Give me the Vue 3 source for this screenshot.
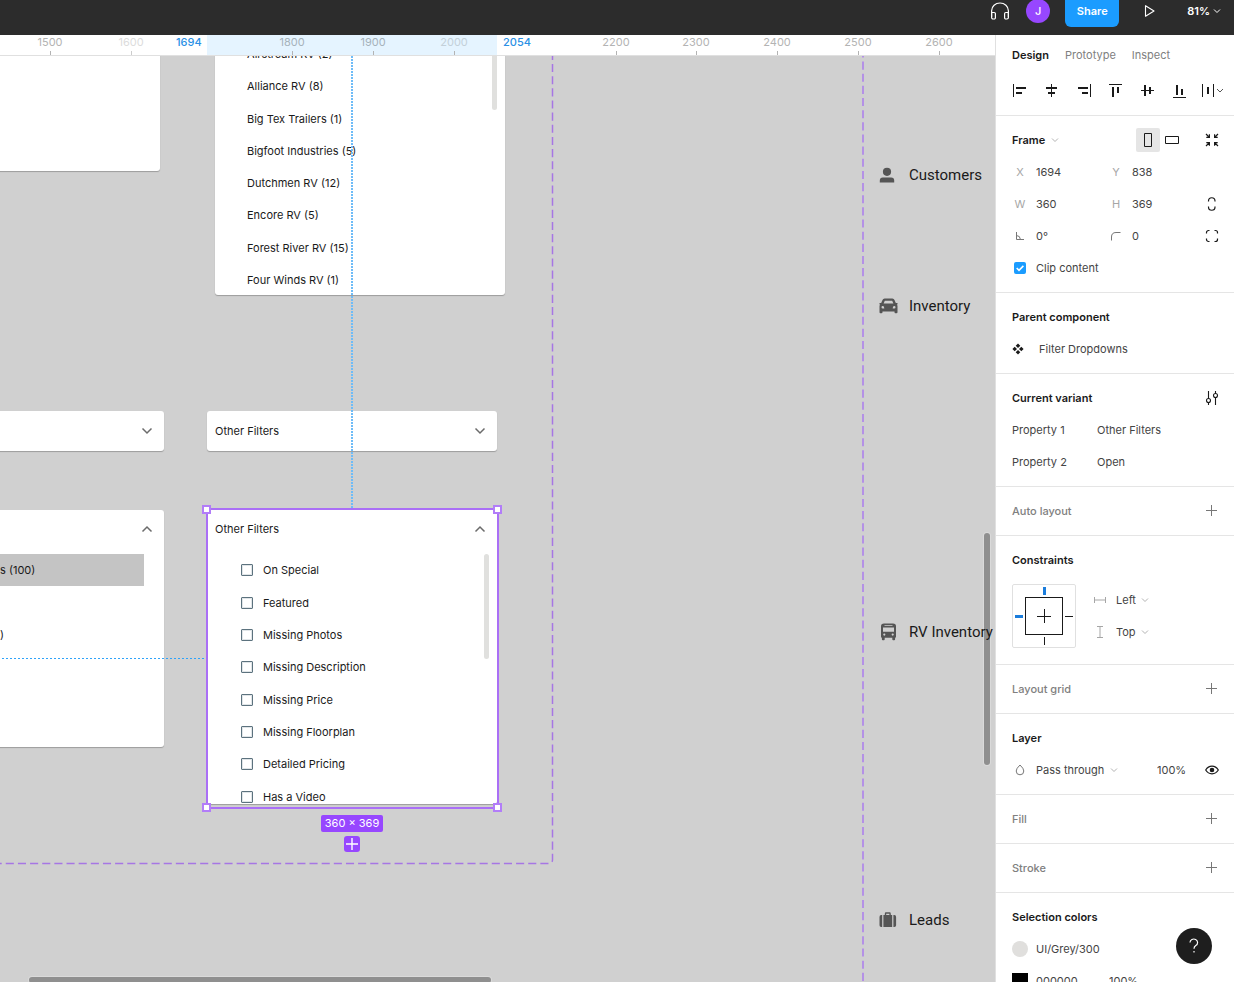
<script setup>
const rulerOrigin = 50
const rulerScale = 0.808
const rulerMarks = [
  { value: 1500 },
  { value: 1600, tone: 'faint' },
  { value: 1800, tone: 'covered' },
  { value: 1900, tone: 'covered' },
  { value: 2000, tone: 'covered-faint' },
  { value: 2200 },
  { value: 2300 },
  { value: 2400 },
  { value: 2500 },
  { value: 2600 },
]
const rulerLeft = (value) => Math.round(rulerOrigin + (value - 1500) * rulerScale) + 'px'

const makes = [
  'Airstream RV (2)',
  'Alliance RV (8)',
  'Big Tex Trailers (1)',
  'Bigfoot Industries (5)',
  'Dutchmen RV (12)',
  'Encore RV (5)',
  'Forest River RV (15)',
  'Four Winds RV (1)',
]
const filters = [
  'On Special',
  'Featured',
  'Missing Photos',
  'Missing Description',
  'Missing Price',
  'Missing Floorplan',
  'Detailed Pricing',
  'Has a Video',
]
const handles = ['nw', 'ne', 'sw', 'se']
const properties = [
  { id: 'prop-1', name: 'Property 1', value: 'Other Filters' },
  { id: 'prop-2', name: 'Property 2', value: 'Open' },
]
const aligns = [
  { name: 'Align left', w: [1, 2, 2], parts: ['M2.5 2v13', 'M5 6h10', 'M5 11h6'] },
  { name: 'Align horizontal centers', w: [1, 2, 2], parts: ['M8.5 2v13', 'M3 6h11', 'M5 11h7'] },
  { name: 'Align right', w: [1, 2, 2], parts: ['M15.5 2v13', 'M3 6h10', 'M7 11h6'] },
  { name: 'Align top', w: [1, 2, 2], parts: ['M2 2.5h13', 'M6 5v10', 'M11 5v6'] },
  { name: 'Align vertical centers', w: [1, 2, 2], parts: ['M2 8.5h13', 'M6 3v11', 'M11 5v7'] },
  { name: 'Align bottom', w: [1, 2, 2], parts: ['M2 15.5h13', 'M6 3v10', 'M11 7v6'] },
]
</script>

<template>
  <div class="app">
    <header class="topbar">
      <div class="tools">
        <button class="icon-btn" aria-label="Start audio">
          <svg width="20" height="20" viewBox="0 0 20 20" fill="none" stroke="#fff" stroke-width="1.2">
            <path d="M1.600 16V9.800a8.400 7.800 0 0 1 16.800 0V16" />
            <path d="M1.600 11.500h2.600a1.200 1.200 0 0 1 1.200 1.200v4.100a1.200 1.200 0 0 1-1.200 1.200H3a1.400 1.400 0 0 1-1.400-1.400zM18.400 11.500h-2.600a1.200 1.200 0 0 0-1.200 1.200v4.100a1.200 1.200 0 0 0 1.200 1.200H17a1.400 1.400 0 0 0 1.400-1.400z" />
          </svg>
        </button>
        <button class="avatar" aria-label="Account">J</button>
        <button class="share">Share</button>
        <button class="icon-btn play" aria-label="Present">
          <svg width="12" height="14" viewBox="0 0 12 14" fill="none" stroke="#fff" stroke-width="1.1" stroke-linejoin="round">
            <path d="M1.500 1.700v10.600L10 7z" />
          </svg>
        </button>
        <button class="zoom">
          <span>81%</span>
          <svg width="8" height="6" viewBox="0 0 8 6" fill="none" stroke="#fff"><path d="M1 1.500l3 3 3-3" /></svg>
        </button>
      </div>
    </header>

    <div class="body">
      <main class="stage">
        <div class="ruler">
          <div class="ruler-range"></div>
          <div v-for="m in rulerMarks" :key="m.value" class="mark" :class="m.tone" :style="{ left: rulerLeft(m.value) }">
            <span>{{ m.value }}</span><i></i>
          </div>
          <span class="edge edge-start">1694</span>
          <span class="edge edge-end">2054</span>
        </div>

        <div class="canvas">
          <section class="card card-blank"></section>

          <section class="card card-makes">
            <ul class="makes">
              <li v-for="m in makes" :key="m">{{ m }}</li>
            </ul>
            <div class="thumb"></div>
          </section>

          <section class="card card-left-closed">
            <div class="card-head">
              <svg class="chev" width="12" height="8" viewBox="0 0 12 8"><path d="M1.500 1.500L6 6l4.500-4.500" /></svg>
            </div>
          </section>

          <section class="card card-closed">
            <div class="card-head">
              <span>Other Filters</span>
              <svg class="chev" width="12" height="8" viewBox="0 0 12 8"><path d="M1.500 1.500L6 6l4.500-4.500" /></svg>
            </div>
          </section>

          <section class="card card-left-open">
            <div class="card-head">
              <svg class="chev" width="12" height="8" viewBox="0 0 12 8"><path d="M1.500 6.500L6 2l4.500 4.500" /></svg>
            </div>
            <div class="option picked">s (100)</div>
            <div class="option"></div>
            <div class="option">)</div>
          </section>

          <section class="card card-open">
            <div class="card-head">
              <span>Other Filters</span>
              <svg class="chev" width="12" height="8" viewBox="0 0 12 8"><path d="M1.500 6.500L6 2l4.500 4.500" /></svg>
            </div>
            <div class="open-body">
              <div class="filters">
                <label v-for="f in filters" :key="f"><input type="checkbox" />{{ f }}</label>
              </div>
              <div class="thumb"></div>
            </div>
          </section>

          <svg class="guides" width="100%" height="100%" fill="none">
            <path d="M552.500 0V804a3.500 3.500 0 0 1-3.500 3.500H0" stroke="#a676e4" stroke-width="1.500" stroke-dasharray="8.100 4.050" stroke-dashoffset="4.150" />
            <path d="M863 0V3000" stroke="#b491e6" stroke-width="2" stroke-dasharray="8.100 4.050" stroke-dashoffset="6.600" />
            <path d="M352 0V453" stroke="#6fbcf7" stroke-width="2" stroke-dasharray="2 1" />
            <path d="M2 602.500H206" stroke="#2ea3fa" stroke-width="1" stroke-dasharray="2 2" />
          </svg>

          <div class="selection">
            <i v-for="h in handles" :key="h" class="handle" :class="h"></i>
          </div>
          <div class="selection-meta">
            <span class="dims">360 × 369</span>
            <button class="add-variant" aria-label="Add variant">
              <svg width="16" height="16" viewBox="0 0 16 16" stroke="#fff" stroke-width="1.400"><path d="M8 2v12M2 8h12" /></svg>
            </button>
          </div>

          <div class="scroll-v"></div>
          <div class="scroll-h"></div>

          <div class="nav-item customers">
            <svg width="20" height="20" viewBox="0 0 20 20" fill="#555">
              <circle cx="8" cy="6.800" r="4.100" />
              <path d="M.800 17.600v-1.800q0-3.200 3-3.200h8.400q3 0 3 3.200v1.800z" />
            </svg>
            <span>Customers</span>
          </div>
          <div class="nav-item inventory">
            <svg width="20" height="20" viewBox="0 0 20 20" fill="#555">
              <path fill-rule="evenodd" d="M5.600 2.400h7.800q1.600 0 2.100 1.500l1.300 3.200h1.700v1.400h-.700q.700.700.700 1.800v6q0 1-1 1h-1q-1 0-1-1v-.800H3.500v.8q0 1-1 1h-1q-1 0-1-1v-6q0-1.100.7-1.800H.500V7.100h1.700l1.300-3.200q.5-1.500 2.100-1.500zm.2 2.400L4.600 7.600h9.800l-1.200-2.800zM3.700 10a1.200 1.200 0 1 0 0 2.400h1.600q0-2.400-1.600-2.400zm11.600 0q-1.600 0-1.600 2.400h1.600a1.200 1.200 0 1 0 0-2.400z" />
            </svg>
            <span>Inventory</span>
          </div>
          <div class="nav-item rv">
            <svg width="20" height="20" viewBox="0 0 20 20" fill="#555">
              <path fill-rule="evenodd" d="M5 1.600h9q3 0 3 2.600v10.600q0 .8-.9.900v1.600q0 .9-.9.900h-1q-.900 0-.900-.900v-1.500H5.700v1.500q0 .9-.9.900h-1q-.9 0-.9-.9v-1.600Q2 15.600 2 14.800V4.200q0-2.600 3-2.600zM5.500 3.200v.8h8v-.8zM4 5.400v4.300h11V5.400zm1.300 6.100a1.100 1.100 0 1 0 0 2.200 1.100 1.100 0 0 0 0-2.200zm8.400 0a1.100 1.100 0 1 0 0 2.200 1.100 1.100 0 0 0 0-2.200z" />
            </svg>
            <span>RV Inventory</span>
          </div>
          <div class="nav-item leads">
            <svg width="20" height="20" viewBox="0 0 20 20" fill="#555">
              <path d="M.500 7q0-2 1.700-2h1v12h-1Q.500 17 .500 15.200zM14.400 5h1q1.700 0 1.700 2v8.200q0 1.800-1.700 1.800h-1z" />
              <path fill-rule="evenodd" d="M4.400 5h1.400V3.700Q5.800 2.300 7 2.300h3.600q1.200 0 1.200 1.400V5h1.400v12H4.400zm2.800-1.300V5h3.200V3.700z" />
            </svg>
            <span>Leads</span>
          </div>
        </div>
      </main>

      <aside class="panel">
        <section class="top-section">
          <nav class="tabs">
            <button class="on">Design</button>
            <button>Prototype</button>
            <button>Inspect</button>
          </nav>
          <div class="aligns">
            <button v-for="a in aligns" :key="a.name" :aria-label="a.name">
              <svg width="17" height="17" viewBox="0 0 17 17" stroke="#1a1a1a" fill="none">
                <path v-for="(p, i) in a.parts" :key="i" :d="p" :stroke-width="a.w[i]" />
              </svg>
            </button>
            <button aria-label="Distribute">
              <svg width="25" height="17" viewBox="0 0 25 17" stroke="#1a1a1a" fill="none">
                <path d="M3.500 2v13M14.500 2v13" /><path d="M9 5v7" stroke-width="2" /><path d="M18 7l3 3 3-3" stroke="#555" />
              </svg>
            </button>
          </div>
        </section>

        <section>
          <div class="row">
            <label class="sel strong"><select aria-label="Frame type"><option>Frame</option></select>
              <svg width="8" height="6" viewBox="0 0 8 6" class="caret"><path d="M1 1.500l3 3 3-3" /></svg>
            </label>
            <button class="orient on" aria-label="Portrait"><svg width="24" height="24" fill="none" stroke="#1a1a1a"><path d="M8.500 5.500h7v13h-7z" /></svg></button>
            <button class="orient" aria-label="Landscape"><svg width="24" height="24" fill="none" stroke="#1a1a1a"><path d="M5.500 8.500h13v7h-13z" /></svg></button>
            <button class="end-btn shrink" aria-label="Resize to fit">
              <svg width="14" height="14" viewBox="0 0 14 14" fill="none" stroke="#1a1a1a" stroke-width="1.200"><path d="M1 1l3.500 3.500M1.300 4.400h3.100V1.300M13 1L9.500 4.500M9.600 1.300v3.100h3.100M1 13l3.500-3.500M1.300 9.600h3.100v3.100M13 13L9.500 9.500M12.700 9.600H9.600v3.100" /></svg>
            </button>
          </div>
          <div class="fields">
            <label for="fx">X</label><input id="fx" value="1694" />
            <label for="fy">Y</label><input id="fy" value="838" /><span></span>
            <label for="fw">W</label><input id="fw" value="360" />
            <label for="fh">H</label><input id="fh" value="369" />
            <button aria-label="Constrain proportions">
              <svg width="10" height="16" viewBox="0 0 10 16" fill="none" stroke="#1a1a1a" stroke-width="1.200"><path d="M1.500 5.500V5a3.200 3.200 0 0 1 6.500 0v.500M1.500 10.500v.500a3.200 3.200 0 0 0 6.500 0v-.500" /></svg>
            </button>
            <label for="fr" aria-label="Rotation"><svg width="10" height="10" fill="none" stroke="#777"><path d="M1.500 1v7.500H9M1.500 4.500q3.500 0 4 4" /></svg></label><input id="fr" value="0°" />
            <label for="fc" aria-label="Corner radius"><svg width="10" height="10" fill="none" stroke="#777"><path d="M.500 9.500V6Q.500 1.500 5 1.500h4.500" /></svg></label><input id="fc" value="0" />
            <button aria-label="Independent corners">
              <svg width="14" height="14" viewBox="0 0 14 14" fill="none" stroke="#1a1a1a" stroke-width="1.200"><path d="M1.500 4.500V3.500a2 2 0 0 1 2-2h1M9.500 1.500h1a2 2 0 0 1 2 2v1M12.500 9.500v1a2 2 0 0 1-2 2h-1M4.500 12.500h-1a2 2 0 0 1-2-2v-1" /></svg>
            </button>
          </div>
          <div class="clip">
            <span class="tick"><input id="clip" type="checkbox" checked /><svg width="12" height="12" fill="none" stroke="#fff" stroke-width="1.600"><path d="M2.700 6l2.300 2.300 4.400-4.400" /></svg></span>
            <label for="clip">Clip content</label>
          </div>
        </section>

        <section>
          <div class="row"><h2>Parent component</h2></div>
          <a class="row component" href="#">
            <svg width="12" height="12" fill="#1a1a1a"><path d="M6 .400l2.300 2.300L6 5 3.700 2.700zM6 7l2.300 2.300L6 11.600 3.700 9.300zM2.700 3.700L5 6 2.700 8.300.400 6zM9.300 3.700L11.600 6 9.300 8.300 7 6z" /></svg>
            <span>Filter Dropdowns</span>
          </a>
        </section>

        <section>
          <div class="row">
            <h2>Current variant</h2>
            <button class="end-btn" aria-label="Edit variant">
              <svg width="14" height="16" viewBox="0 0 14 16" fill="none" stroke="#1a1a1a" stroke-width="1.100"><path d="M3.500 1v7.500M3.500 12.500V15M10.500 1v2.500M10.500 7.500V15" /><circle cx="3.500" cy="10.500" r="2" /><circle cx="10.500" cy="5.500" r="2" /></svg>
            </button>
          </div>
          <div v-for="p in properties" :key="p.id" class="row property">
            <label :for="p.id">{{ p.name }}</label>
            <select :id="p.id"><option>{{ p.value }}</option></select>
          </div>
        </section>

        <section>
          <div class="row"><h2 class="muted">Auto layout</h2><button class="end-btn" aria-label="Add auto layout"><svg class="plus" width="12" height="12"><path d="M5.500 0v11M0 5.500h11" /></svg></button></div>
        </section>

        <section>
          <div class="row"><h2>Constraints</h2></div>
          <div class="constraints">
            <svg width="64" height="64" viewBox="0 0 64 64" fill="none" stroke="#1a1a1a">
              <rect x=".5" y=".5" width="63" height="63" rx="1.500" stroke="#e0e0e0" />
              <rect x="13.500" y="13.500" width="37" height="37" />
              <path d="M32.500 25v14M25 32.500h14M32.500 53v8M53 32.500h8" />
              <path d="M32.500 3v8M3 32.500h8" stroke="#1b7ddc" stroke-width="3" />
            </svg>
            <div class="constraint-list">
              <label class="sel">
                <svg class="axis" width="12" height="12"><path d="M.500 3v6M11.500 3v6M1 6h10" /></svg>
                <select aria-label="Horizontal constraint"><option>Left</option></select>
                <svg width="8" height="6" viewBox="0 0 8 6" class="caret"><path d="M1 1.500l3 3 3-3" /></svg>
              </label>
              <label class="sel">
                <svg class="axis" width="12" height="12"><path d="M3 .500h6M3 11.500h6M6 1v10" /></svg>
                <select aria-label="Vertical constraint"><option>Top</option></select>
                <svg width="8" height="6" viewBox="0 0 8 6" class="caret"><path d="M1 1.500l3 3 3-3" /></svg>
              </label>
            </div>
          </div>
        </section>

        <section>
          <div class="row"><h2 class="muted">Layout grid</h2><button class="end-btn" aria-label="Add layout grid"><svg class="plus" width="12" height="12"><path d="M5.500 0v11M0 5.500h11" /></svg></button></div>
        </section>

        <section>
          <div class="row"><h2>Layer</h2></div>
          <div class="row layer">
            <svg class="drop" width="10" height="12" viewBox="0 0 10 12" fill="none" stroke="#777"><path d="M5 1Q1.200 4.500 1.200 7a3.800 3.800 0 0 0 7.600 0Q8.800 4.500 5 1z" /></svg>
            <label class="sel"><select aria-label="Blend mode"><option>Pass through</option></select>
              <svg width="8" height="6" viewBox="0 0 8 6" class="caret"><path d="M1 1.500l3 3 3-3" /></svg>
            </label>
            <input class="opacity" aria-label="Layer opacity" value="100%" />
            <button class="end-btn" aria-label="Toggle visibility">
              <svg width="14" height="10" viewBox="0 0 14 10" fill="none" stroke="#1a1a1a" stroke-width="1.200"><path d="M.700 5Q3 1.200 7 1.200T13.300 5Q11 8.800 7 8.800T.700 5z" /><circle cx="7" cy="5" r="1.700" fill="#1a1a1a" /></svg>
            </button>
          </div>
        </section>

        <section>
          <div class="row"><h2 class="muted">Fill</h2><button class="end-btn" aria-label="Add fill"><svg class="plus" width="12" height="12"><path d="M5.500 0v11M0 5.500h11" /></svg></button></div>
        </section>
        <section>
          <div class="row"><h2 class="muted">Stroke</h2><button class="end-btn" aria-label="Add stroke"><svg class="plus" width="12" height="12"><path d="M5.500 0v11M0 5.500h11" /></svg></button></div>
        </section>

        <section>
          <div class="row"><h2>Selection colors</h2></div>
          <div class="row color"><i class="swatch round"></i><span>UI/Grey/300</span></div>
          <div class="row color"><i class="swatch"></i><input class="hex" aria-label="Hex colour" value="000000" /><input class="opacity" aria-label="Colour opacity" value="100%" /></div>
        </section>
      </aside>
    </div>

    <button class="help" aria-label="Help">
      <svg width="12" height="16" viewBox="0 0 12 16" fill="none" stroke="#fff" stroke-width="1.200"><path d="M2 4.500a3.800 3.500 0 1 1 5.800 3Q6 8.600 6 10.800" /><path d="M6 13v1.400" /></svg>
    </button>
  </div>
</template>

<style>
body {
  margin: 0;
  overflow: hidden;
}
</style>

<style scoped>
.app {
  display: flex;
  flex-direction: column;
  height: 100vh;
  overflow: hidden;
  font-family: Inter, "Liberation Sans", sans-serif;
  font-size: 11px;
  line-height: 16px;
  color: #444;
}
.app *,
.app *::before {
  box-sizing: border-box;
}
button,
input,
select {
  appearance: none;
  margin: 0;
  padding: 0;
  border: 0;
  border-radius: 0;
  background: none;
  font: inherit;
  color: inherit;
}
button {
  display: flex;
  align-items: center;
  justify-content: center;
}
svg {
  display: block;
  flex: none;
}

/* top bar */
.topbar {
  flex: none;
  display: flex;
  align-items: flex-end;
  justify-content: flex-end;
  height: 35px;
  overflow: hidden;
  background: #2c2c2c;
  color: #fff;
}
.tools {
  display: flex;
  align-items: center;
  height: 48px;
  padding-right: 13px;
}
.avatar {
  width: 24px;
  height: 24px;
  margin: 0 15px 0 16px;
  border-radius: 50%;
  background: #9747ff;
  font-weight: 500;
}
.share {
  width: 54px;
  height: 32px;
  border-radius: 6px;
  background: #1b9cff;
  font-weight: 600;
}
.play {
  margin: 0 31px 0 25px;
}
.zoom {
  gap: 3px;
  font-weight: 600;
}

.body {
  flex: 1;
  display: flex;
  min-height: 0;
}
.stage {
  flex: 1;
  display: flex;
  flex-direction: column;
  min-width: 0;
}

/* ruler */
.ruler {
  flex: none;
  position: relative;
  height: 21px;
  border-bottom: 1px solid #e0e0e0;
  background: #fff;
  overflow: hidden;
  line-height: 14px;
  color: #b3b3b3;
}
.ruler-range {
  position: absolute;
  left: 207px;
  width: 290px;
  top: 0;
  bottom: 0;
  background: #e5f4ff;
}
.mark {
  position: absolute;
  top: 0;
  width: 40px;
  height: 20px;
  margin-left: -20px;
  display: flex;
  flex-direction: column;
  align-items: center;
  justify-content: space-between;
}
.mark i {
  width: 1px;
  height: 4px;
  background: #b3b3b3;
}
.faint {
  color: #dcdcdc;
}
.faint i {
  background: #ccc;
}
.covered {
  color: #a5b2bb;
}
.covered-faint {
  color: #c3d0d9;
}
.edge {
  position: absolute;
  top: 0;
  color: #2a90e5;
  font-weight: 500;
}
.edge-start {
  left: 176px;
}
.edge-end {
  left: 503px;
}

/* canvas */
.canvas {
  flex: 1;
  position: relative;
  overflow: hidden;
  background: #d0d0d0;
  color: #1a1a1a;
}
.card {
  position: absolute;
  width: 290px;
  border-radius: 3px;
  background: #fff;
  box-shadow: 0 1px 1px rgba(0, 0, 0, 0.25);
  overflow: hidden;
}
.card-blank {
  left: -130px;
  top: -60px;
  height: 175px;
}
.card-makes {
  left: 215px;
  top: -20px;
  height: 259px;
  display: flex;
  justify-content: space-between;
  padding: 2px 8px 0 32px;
}
.makes {
  list-style: none;
  margin: 0;
  padding: 0;
  height: 258px;
  display: grid;
  grid-auto-rows: 1fr;
  align-items: center;
}
.thumb {
  width: 5px;
  border-radius: 3px;
  background: #e0e0de;
}
.card-makes .thumb {
  height: 72px;
}
.card-left-closed {
  left: -126px;
  top: 355px;
}
.card-closed {
  left: 207px;
  top: 355px;
}
.card-left-open {
  left: -126px;
  top: 454px;
  height: 237px;
}
.card-open {
  left: 207px;
  top: 454px;
  height: 294px;
}
.card-head {
  display: flex;
  align-items: center;
  height: 40px;
  padding: 0 11px 0 8px;
}
.card-open .card-head,
.card-left-open .card-head {
  height: 38px;
}
.card-left-open .card-head {
  margin-bottom: 6px;
}
.chev {
  margin-left: auto;
  fill: none;
  stroke: #6b6b6b;
  stroke-width: 1.5px;
}
.option {
  display: flex;
  align-items: center;
  height: 32px;
  margin-right: 20px;
  padding-left: 126px;
}
.picked {
  background: #c4c4c4;
}
.open-body {
  display: flex;
  justify-content: space-between;
  padding: 6px 8px 0 34px;
}
.filters {
  height: 259px;
  display: grid;
  grid-auto-rows: 1fr;
}
.filters label {
  display: flex;
  align-items: center;
  gap: 10px;
}
.filters input {
  width: 12px;
  height: 12px;
  border: 1px solid #5c727e;
  border-radius: 1px;
  box-shadow: inset 0 0 0 1px #e0e5e8;
}
.open-body .thumb {
  height: 105px;
}
.guides {
  position: absolute;
  inset: 0;
}
.selection {
  position: absolute;
  left: 206px;
  top: 452px;
  width: 293px;
  height: 301px;
  border: 2px solid #aa6ff6;
}
.handle {
  position: absolute;
  width: 9px;
  height: 9px;
  border: 2px solid #b27df8;
  background: #fff;
}
.nw {
  left: -6px;
  top: -5px;
}
.ne {
  right: -5px;
  top: -5px;
}
.sw {
  left: -6px;
  bottom: -5px;
}
.se {
  right: -5px;
  bottom: -5px;
}
.selection-meta {
  position: absolute;
  left: 206px;
  top: 759px;
  width: 292px;
  display: flex;
  flex-direction: column;
  align-items: center;
  gap: 4px;
}
.dims {
  padding: 0 4px;
  border-radius: 2px;
  background: #9747ff;
  color: #fff;
  line-height: 17px;
}
.add-variant {
  width: 16px;
  height: 16px;
  border-radius: 3px;
  background: #9747ff;
}
.scroll-v {
  position: absolute;
  right: 5px;
  top: 477px;
  width: 6px;
  height: 232px;
  border-radius: 3px;
  background: #8f8f8f;
  box-shadow: 0 0 0 1px #dadada;
}
.scroll-h {
  position: absolute;
  left: 29px;
  bottom: -1px;
  width: 462px;
  height: 6px;
  border-radius: 3px;
  background: #8f8f8f;
  box-shadow: 0 0 0 1px #dadada;
}
.nav-item {
  position: absolute;
  left: 879px;
  display: flex;
  align-items: center;
  gap: 10px;
  height: 20px;
  font-family: Roboto, "Liberation Sans", sans-serif;
  font-size: 15px;
  white-space: nowrap;
}
.customers {
  top: 109px;
}
.inventory {
  top: 240px;
}
.rv {
  top: 566px;
}
.leads {
  top: 854px;
}

/* properties panel */
.panel {
  flex: none;
  width: 239px;
  border-left: 1px solid #e0e0e0;
  background: #fff;
  overflow: hidden;
}
.panel section {
  padding: 8px 6px 8px 0;
  border-bottom: 1px solid #e5e5e5;
}
.panel .top-section {
  padding: 0 0 8px;
}
.tabs {
  display: flex;
  gap: 16px;
  height: 40px;
  padding-left: 16px;
  color: #808080;
}
.tabs .on {
  color: #1a1a1a;
  font-weight: 600;
}
.aligns {
  display: flex;
  padding-left: 8px;
}
.aligns button {
  width: 32px;
  height: 32px;
  padding: 0 1px 1px 0;
}
.row {
  display: flex;
  align-items: center;
  height: 32px;
  padding-left: 16px;
}
h2 {
  margin: 0;
  font-size: 11px;
  font-weight: 600;
  color: #1a1a1a;
}
.muted {
  color: #808080;
  font-weight: 500;
}
.end-btn {
  width: 32px;
  height: 32px;
  margin-left: auto;
}
.orient {
  width: 24px;
  height: 24px;
  border-radius: 2px;
}
.orient.on {
  margin-left: auto;
  background: #e5e5e5;
}
.shrink {
  margin-left: 12px;
}
.sel {
  display: flex;
  align-items: center;
  gap: 5px;
}
.strong {
  color: #1a1a1a;
  font-weight: 600;
}
.caret {
  fill: none;
  stroke: #b3b3b3;
}
.fields {
  display: grid;
  grid-template-columns: 32px 64px 32px 64px 32px;
  grid-auto-rows: 32px;
  align-items: center;
  padding-left: 8px;
}
.fields label {
  display: flex;
  justify-content: center;
  color: #a6a6a6;
}
.fields input {
  width: 100%;
}
.clip {
  display: grid;
  grid-template-columns: 32px 1fr;
  height: 32px;
  align-items: center;
  padding-left: 8px;
}
.tick {
  display: grid;
  place-items: center;
}
.tick > * {
  grid-area: 1 / 1;
}
.tick input {
  width: 12px;
  height: 12px;
  border-radius: 2px;
  background: #1b9cff;
}
.tick svg {
  pointer-events: none;
}
.component {
  gap: 15px;
  color: inherit;
  text-decoration: none;
}
.property label {
  width: 85px;
}
.plus {
  fill: none;
  stroke: #777;
}
.constraints {
  display: flex;
  gap: 18px;
  padding: 8px 0 8px 16px;
}
.constraint-list .sel {
  height: 32px;
}
.axis {
  margin-right: 5px;
  fill: none;
  stroke: #a6a6a6;
}
.layer .sel {
  margin-left: 11px;
}
.drop {
  margin-left: 3px;
}
.opacity {
  width: 39px;
  margin-left: auto;
}
.layer .end-btn {
  margin-left: 0;
}
.swatch {
  width: 16px;
  height: 16px;
  margin-right: 8px;
  background: #000;
}
.round {
  border-radius: 50%;
  background: #e0dfdd;
}
.hex {
  width: 73px;
}
.color .opacity {
  margin-left: 0;
}
.help {
  position: absolute;
  right: 22px;
  bottom: 18px;
  width: 36px;
  height: 36px;
  border-radius: 50%;
  background: #1e1e1e;
}
</style>
